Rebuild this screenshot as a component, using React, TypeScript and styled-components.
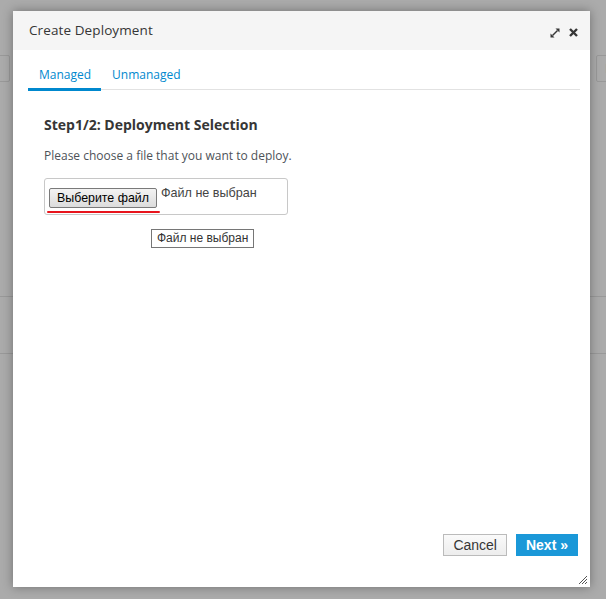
import React from "react";
import styled, { createGlobalStyle } from "styled-components";

const Global = createGlobalStyle`
  html, body { margin: 0; padding: 0; }
  body {
    width: 606px; height: 599px; overflow: hidden;
    background: #ababab;
    font-family: "Open Sans", "Liberation Sans", sans-serif;
  }
`;

const Page = styled.div`
  position: relative;
  width: 606px;
  height: 599px;
  background: #ababab;
  overflow: hidden;
`;

const PageToolbar = styled.div`
  display: flex;
  justify-content: space-between;
  padding-top: 55px;
`;

const GhostBox = styled.div`
  width: 24px;
  height: 25px;
  border: 1px solid #999;
  border-radius: 2px;
  margin-left: -16px;
  color: #7c7c7c;
  font-size: 13px;
  line-height: 25px;
  text-indent: 18px;
`;

const GhostBoxRight = styled(GhostBox)`
  margin-left: 0;
  margin-right: -16px;
  text-indent: 8px;
`;

const GhostRule = styled.div<{ $top: number }>`
  margin-top: ${(p) => p.$top}px;
  height: 1px;
  background: #999;
`;

const Modal = styled.div`
  position: absolute;
  left: 13px;
  top: 11px;
  width: 577px;
  height: 576px;
  background: #fff;
  box-shadow: 0 0 10px rgba(0, 0, 0, 0.35);
  display: flex;
  flex-direction: column;
`;

const Header = styled.div`
  height: 39px;
  background: #f5f5f5;
  display: flex;
  align-items: center;
  padding: 0 12px 0 16px;
`;

const Title = styled.h4`
  margin: 0;
  flex: 1;
  font-size: 13.5px;
  font-weight: 500;
  color: #363636;
  letter-spacing: 0.1px;
  padding-bottom: 1px;
`;

const HeaderIcons = styled.div`
  display: flex;
  align-items: center;
  gap: 9px;
  padding-top: 4px;
`;

const Body = styled.div`
  flex: 1;
  padding: 0 10px 0 15px;
  display: flex;
  flex-direction: column;
`;

const Tabs = styled.div`
  display: flex;
  border-bottom: 1px solid #e2e2e2;
  height: 39px;
  align-items: stretch;
`;

const Tab = styled.div<{ $active?: boolean }>`
  padding: 16px 10px 0 11px;
  font-size: 12px;
  color: #0088ce;
  border-bottom: 3px solid ${(p) => (p.$active ? "#0088ce" : "transparent")};
  margin-bottom: -2px;
`;

const Content = styled.div`
  padding: 25px 0 0 16px;
`;

const StepTitle = styled.h3`
  margin: 0;
  font-size: 14px;
  font-weight: 700;
  color: #363636;
`;

const Help = styled.p`
  margin: 13px 0 0;
  font-size: 12px;
  color: #4d5258;
`;

const FileBox = styled.div`
  margin-top: 14px;
  width: 244px;
  height: 37px;
  border: 1px solid #c8c8c8;
  border-radius: 3px;
  display: flex;
  align-items: flex-start;
  padding: 8px 0 0 4px;
  box-sizing: border-box;
`;

const FilePick = styled.div`
  display: flex;
  flex-direction: column;
  align-items: flex-start;
`;

const NativeButton = styled.div`
  font-family: "Liberation Sans", Arial, sans-serif;
  font-size: 12.4px;
  color: #000;
  background: linear-gradient(#f3f3f3, #dcdcdc);
  border: 1px solid #7a7a7a;
  border-radius: 2px;
  padding: 1px 7px;
  height: 16px;
  line-height: 16px;
  margin-top: 1px;
  white-space: nowrap;
`;

const RedLine = styled.div`
  height: 2px;
  background: #e8141c;
  width: 113px;
  margin: 3px -10px 0 -2px;
  border-radius: 1px;
`;

const FileName = styled.span`
  font-family: "Liberation Sans", Arial, sans-serif;
  font-size: 12.6px;
  color: #444;
  margin-left: 4px;
  line-height: 13px;
  white-space: nowrap;
`;

const TooltipRow = styled.div`
  padding: 10px 0 0 107px;
`;

const Tooltip = styled.div`
  display: inline-block;
  font-family: "Liberation Sans", Arial, sans-serif;
  font-size: 12px;
  color: #333;
  background: #fff;
  border: 1px solid #767676;
  padding: 2px 5px 2px 5px;
  line-height: 13px;
`;

const Footer = styled.div`
  display: flex;
  justify-content: flex-end;
  gap: 9px;
  padding: 0 12px 31px 0;
  position: relative;
`;

const Btn = styled.div<{ $primary?: boolean }>`
  height: 20px;
  line-height: 20px;
  padding: 0 9px;
  font-family: "Liberation Sans", Arial, sans-serif;
  font-size: 14px;
  font-weight: ${(p) => (p.$primary ? 700 : 400)};
  color: ${(p) => (p.$primary ? "#fff" : "#363636")};
  background: ${(p) => (p.$primary ? "#1a98d8" : "linear-gradient(#fafafa, #ededed)")};
  border: 1px solid ${(p) => (p.$primary ? "#1a98d8" : "#bbb")};
`;

const Grip = styled.svg`
  position: absolute;
  right: 2px;
  bottom: 2px;
`;

export default function App() {
  return (
    <>
      <Global />
      <Page>
        <PageToolbar>
          <GhostBox />
          <GhostBoxRight>E</GhostBoxRight>
        </PageToolbar>
        <GhostRule $top={214} />
        <GhostRule $top={56} />
        <Modal>
          <Header>
            <Title>Create Deployment</Title>
            <HeaderIcons>
              <svg width="10" height="10" viewBox="0 0 10 10">
                <path d="M2.5 7.5L7.5 2.5" stroke="#363636" strokeWidth="1.4" />
                <path d="M5.5 0.5H9.5V4.5Z M0.5 5.5V9.5H4.5Z" fill="#363636" />
              </svg>
              <svg width="9" height="9" viewBox="0 0 9 9">
                <path d="M1 1l7 7M8 1L1 8" stroke="#363636" strokeWidth="2.4" />
              </svg>
            </HeaderIcons>
          </Header>
          <Body>
            <Tabs>
              <Tab $active>Managed</Tab>
              <Tab>Unmanaged</Tab>
            </Tabs>
            <Content>
              <StepTitle>Step1/2: Deployment Selection</StepTitle>
              <Help>Please choose a file that you want to deploy.</Help>
              <FileBox>
                <FilePick>
                  <NativeButton>Выберите файл</NativeButton>
                  <RedLine />
                </FilePick>
                <FileName>Файл не выбран</FileName>
              </FileBox>
              <TooltipRow>
                <Tooltip>Файл не выбран</Tooltip>
              </TooltipRow>
            </Content>
          </Body>
          <Footer>
            <Btn>Cancel</Btn>
            <Btn $primary>Next »</Btn>
            <Grip width="10" height="10" viewBox="0 0 10 10">
              <path d="M9 1L1 9M9 4L4 9M9 7L7 9" stroke="#555" strokeWidth="1" />
            </Grip>
          </Footer>
        </Modal>
      </Page>
    </>
  );
}
